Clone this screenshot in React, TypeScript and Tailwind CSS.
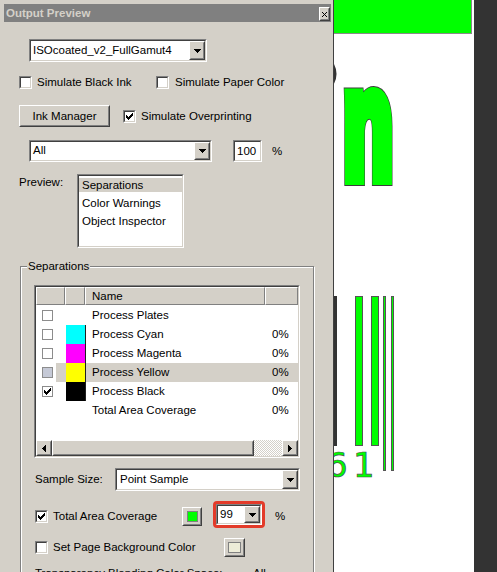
import React from "react";

const font = "font-['Liberation_Sans',Arial,sans-serif]";

type BoxProps = { className?: string; inner?: string; children?: React.ReactNode };

function Sunken({ className = "", inner = "", children }: BoxProps) {
  return (
    <div className={`border border-t-[#808080] border-l-[#808080] border-b-white border-r-white ${className}`}>
      <div className={`h-full w-full border border-t-[#404040] border-l-[#404040] border-b-[#d4d0c8] border-r-[#d4d0c8] ${inner}`}>
        {children}
      </div>
    </div>
  );
}

function Raised({ className = "", inner = "", children }: BoxProps) {
  return (
    <div className={`bg-[#d4d0c8] border border-t-white border-l-white border-b-[#404040] border-r-[#404040] ${className}`}>
      <div className={`h-full w-full border border-t-[#d4d0c8] border-l-[#d4d0c8] border-b-[#808080] border-r-[#808080] flex items-center justify-center ${inner}`}>
        {children}
      </div>
    </div>
  );
}

function DownArrow() {
  return (
    <svg width="7" height="4" shapeRendering="crispEdges" className="block">
      <path d="M0 0h7v1H0zM1 1h5v1H1zM2 2h3v1H2zM3 3h1v1H3z" fill="#000" />
    </svg>
  );
}

function LeftArrow() {
  return (
    <svg width="4" height="7" shapeRendering="crispEdges" className="block">
      <path d="M3 0h1v7H3zM2 1h1v5H2zM1 2h1v3H1zM0 3h1v1H0z" fill="#000" />
    </svg>
  );
}

function RightArrow() {
  return (
    <svg width="4" height="7" shapeRendering="crispEdges" className="block">
      <path d="M0 0h1v7H0zM1 1h1v5H1zM2 2h1v3H2zM3 3h1v1H3z" fill="#000" />
    </svg>
  );
}

function CheckMark() {
  return (
    <svg width="7" height="7" shapeRendering="crispEdges" className="block">
      <path
        d="M6 0h1v1H6zM5 1h2v1H5zM0 2h1v1H0zM4 2h3v1H4zM0 3h2v1H0zM3 3h3v1H3zM0 4h5v1H0zM1 5h3v1H1zM2 6h1v1H2z"
        fill="#000"
      />
    </svg>
  );
}

function Checkbox({ checked = false }: { checked?: boolean }) {
  return (
    <Sunken className="w-[13px] h-[13px] shrink-0" inner="bg-white flex items-center justify-center">
      {checked && <CheckMark />}
    </Sunken>
  );
}

function Combo({ className, text }: { className: string; text: string }) {
  return (
    <Sunken className={className} inner="bg-white flex items-center">
      <span className="flex-1 pl-[2px] leading-none whitespace-nowrap overflow-hidden">{text}</span>
      <Raised className="w-[16px] h-full shrink-0">
        <DownArrow />
      </Raised>
    </Sunken>
  );
}

type Row = {
  name: string;
  box: boolean;
  checked?: boolean;
  swatch?: string;
  pct?: boolean;
  selected?: boolean;
};

const rows: Row[] = [
  { name: "Process Plates", box: true },
  { name: "Process Cyan", box: true, swatch: "bg-[#00ffff]", pct: true },
  { name: "Process Magenta", box: true, swatch: "bg-[#ff00ff]", pct: true },
  { name: "Process Yellow", box: true, swatch: "bg-[#ffff00]", pct: true, selected: true },
  { name: "Process Black", box: true, checked: true, swatch: "bg-black", pct: true },
  { name: "Total Area Coverage", box: false, pct: true },
];

function SepTable() {
  return (
    <Sunken className="w-[266px] h-[173px]" inner="bg-white flex flex-col">
      <div className="h-[18px] flex bg-[#d4d0c8] shrink-0">
        <div className="w-[29px] h-full border border-t-white border-l-white border-r-[#808080] border-b-[#808080]" />
        <div className="w-[20px] h-full border border-t-white border-l-white border-r-[#808080] border-b-[#808080]" />
        <div className="w-[180px] h-full border border-t-white border-l-white border-r-[#808080] border-b-[#808080] flex items-center pl-[6px]">
          Name
        </div>
        <div className="flex-1 h-full border border-t-white border-l-white border-r-[#808080] border-b-[#808080]" />
      </div>
      <div className="flex-1 flex flex-col pt-[1px]">
        {rows.map((r) => (
          <div key={r.name} className="h-[19px] flex shrink-0">
            <div className="w-[20px] h-full flex items-center pl-[6px]">
              {r.box && (
                <div
                  className={`w-[11px] h-[11px] border border-[#8c8c8c] flex items-center justify-center ${
                    r.selected ? "bg-[#c5c9d6]" : "bg-white"
                  }`}
                >
                  {r.checked && <CheckMark />}
                </div>
              )}
            </div>
            <div className={`flex-1 h-full flex ${r.selected ? "bg-[#d4d0c8]" : ""}`}>
              <div className="w-[10px] h-full" />
              <div className="w-[20px] h-full">
                {r.swatch && <div className={`w-full h-full border-r border-r-[#202020] ${r.swatch}`} />}
              </div>
              <div className="w-[179px] h-full flex items-center pl-[6px] whitespace-nowrap">{r.name}</div>
              <div className="flex-1 h-full flex items-center pl-[7px]">{r.pct ? "0%" : ""}</div>
            </div>
          </div>
        ))}
      </div>
      <div className="h-[16px] flex shrink-0">
        <Raised className="w-[16px] h-full">
          <LeftArrow />
        </Raised>
        <Raised className="w-[202px] h-full" />
        <div className="flex-1 h-full bg-[repeating-conic-gradient(#ffffff_0%_25%,#d4d0c8_0%_50%)] bg-[length:2px_2px]" />
        <Raised className="w-[16px] h-full">
          <RightArrow />
        </Raised>
      </div>
    </Sunken>
  );
}

function Panel() {
  return (
    <div className={`w-[334px] h-full shrink-0 bg-[#d4d0c8] border-r border-r-[#404040] flex flex-col overflow-hidden text-black text-[11.5px] leading-[13px] ${font}`}>
      {/* title bar */}
      <div className="mt-[4px] ml-[4px] w-[327px] h-[18px] shrink-0 bg-[#808080] flex items-start pl-[2px] pr-[1px]">
        <span className="mt-[3px] font-bold text-[11.5px] leading-[13px] text-[#d4d0c8]">Output Preview</span>
        <Raised className="ml-auto mt-[3px] w-[11px] h-[14px]">
          <svg width="5" height="5" shapeRendering="crispEdges" className="block">
            <path d="M0 0h1v1H0zM4 0h1v1H4zM1 1h1v1H1zM3 1h1v1H3zM2 2h1v1H2zM1 3h1v1H1zM3 3h1v1H3zM0 4h1v1H0zM4 4h1v1H4z" fill="#000" />
          </svg>
        </Raised>
      </div>

      <Combo className="mt-[17px] ml-[29px] w-[178px] h-[23px] shrink-0" text="ISOcoated_v2_FullGamut4" />

      <div className="mt-[14px] ml-[19px] h-[13px] flex items-center shrink-0">
        <div className="w-[137px] flex items-center gap-[5px]">
          <Checkbox />
          <span className="whitespace-nowrap">Simulate Black Ink</span>
        </div>
        <div className="flex items-center gap-[6px]">
          <Checkbox />
          <span className="whitespace-nowrap">Simulate Paper Color</span>
        </div>
      </div>

      <div className="mt-[16px] ml-[19px] h-[22px] flex items-center shrink-0">
        <Raised className="w-[91px] h-[22px]">
          <span className="whitespace-nowrap">Ink Manager</span>
        </Raised>
        <div className="ml-[13px] flex items-center gap-[5px]">
          <Checkbox checked />
          <span className="whitespace-nowrap">Simulate Overprinting</span>
        </div>
      </div>

      <div className="mt-[13px] ml-[29px] h-[22px] flex items-center shrink-0">
        <Combo className="w-[183px] h-[22px]" text="All" />
        <Sunken className="ml-[21px] w-[29px] h-[22px]" inner="bg-white flex items-center pl-[2px]">
          100
        </Sunken>
        <span className="ml-[10px]">%</span>
      </div>

      <div className="mt-[12px] ml-[19px] flex shrink-0">
        <div className="w-[58px] pt-[2px]">Preview:</div>
        <Sunken className="w-[107px] h-[74px]" inner="bg-white flex flex-col gap-[4px] pt-[2px]">
          <div className="h-[14px] flex items-center pl-[3px] bg-[#d4d0c8]">Separations</div>
          <div className="h-[14px] flex items-center pl-[3px]">Color Warnings</div>
          <div className="h-[14px] flex items-center pl-[3px] whitespace-nowrap">Object Inspector</div>
        </Sunken>
      </div>

      {/* Separations group */}
      <div className="mt-[18px] ml-[20px] w-[294px] h-[420px] shrink-0 relative border border-[#808080] shadow-[inset_1px_1px_0_#ffffff,1px_1px_0_#ffffff] pt-[18px] pl-[13px]">
        <span className="absolute left-[6px] top-[-7px] px-[1px] bg-[#d4d0c8] leading-[13px]">Separations</span>

        <SepTable />

        <div className="mt-[10px] h-[23px] flex items-center">
          <span className="ml-[1px] w-[80px] whitespace-nowrap">Sample Size:</span>
          <Sunken className="w-[185px] h-[23px]" inner="bg-white flex items-center">
            <span className="flex-1 pl-[3px] whitespace-nowrap">Point Sample</span>
            <Raised className="w-[16px] h-full shrink-0">
              <DownArrow />
            </Raised>
          </Sunken>
        </div>

        <div className="mt-[10px] h-[27px] flex items-center">
          <div className="w-[148px] pl-[1px] flex items-center gap-[5px] translate-y-[2px]">
            <Checkbox checked />
            <span className="whitespace-nowrap">Total Area Coverage</span>
          </div>
          <Raised className="w-[20px] h-[19px] translate-y-[2px]">
            <div className="w-[11px] h-[11px] border border-[#808080] bg-[#00ff00]" />
          </Raised>
          <div className="ml-[11px] w-[52px] h-[27px] border-[3px] border-[#e33b2a] rounded-[4px]">
            <Sunken className="w-full h-full" inner="bg-white flex items-center">
              <span className="flex-1 pl-[2px]">99</span>
              <Raised className="w-[16px] h-full shrink-0">
                <DownArrow />
              </Raised>
            </Sunken>
          </div>
          <span className="ml-[10px] translate-y-[2px]">%</span>
        </div>

        <div className="mt-[10px] h-[19px] flex items-center">
          <div className="w-[190px] pl-[1px] flex items-center gap-[5px]">
            <Checkbox />
            <span className="whitespace-nowrap">Set Page Background Color</span>
          </div>
          <Raised className="w-[21px] h-[19px]">
            <div className="w-[13px] h-[11px] border border-[#808080] bg-[#edecd8]" />
          </Raised>
        </div>

        <div className="mt-[10px] h-[13px] flex items-center">
          <span className="ml-[1px] w-[218px] whitespace-nowrap">Transparency Blending Color Space:</span>
          <span>All</span>
        </div>
      </div>
    </div>
  );
}

function Canvas() {
  return (
    <div className="relative w-[140px] h-full shrink-0 bg-white overflow-hidden">
      <div className="absolute left-0 top-0 w-[138px] h-[34px] bg-[#00ff00] border-r border-b border-[#8a8a8a]" />
      <svg className="absolute left-0 top-0" width="140" height="572">
        <path d="M-2 63 Q4 73 -1 83" stroke="#333" strokeWidth="2.5" fill="none" />
        <g transform="scale(0.53,1)">
          <text x="18" y="177" fontFamily="Liberation Sans, Arial, sans-serif" fontWeight="700" fontSize="152" fill="#00ff00" stroke="#3c3c3c" strokeWidth="18">
            n
          </text>
          <text x="18" y="177" fontFamily="Liberation Sans, Arial, sans-serif" fontWeight="700" fontSize="152" fill="#00ff00" stroke="#00ff00" strokeWidth="16">
            n
          </text>
        </g>
        <rect x="0" y="296" width="3" height="150" fill="#333" />
        <rect x="21.5" y="296.5" width="7" height="149" fill="#00ff00" stroke="#555" strokeWidth="1" />
        <rect x="37.5" y="296.5" width="7" height="149" fill="#00ff00" stroke="#555" strokeWidth="1" />
        <rect x="49.5" y="296.5" width="2" height="174" fill="#00ff00" stroke="#555" strokeWidth="1" />
        <rect x="57.5" y="296.5" width="2" height="174" fill="#00ff00" stroke="#555" strokeWidth="1" />
        <text x="-8" y="477" fontFamily="DejaVu Sans, sans-serif" fontSize="34" fill="#00ff00" stroke="#4a4a4a" strokeWidth="0.7">
          6
        </text>
        <text x="19" y="477" fontFamily="DejaVu Sans, sans-serif" fontSize="34" fill="#00ff00" stroke="#4a4a4a" strokeWidth="0.7">
          1
        </text>
      </svg>
    </div>
  );
}

export default function App() {
  return (
    <div className="flex w-[497px] h-[572px] overflow-hidden bg-[#333333]">
      <Panel />
      <Canvas />
      <div className="flex-1 h-full bg-[#333333]" />
    </div>
  );
}
